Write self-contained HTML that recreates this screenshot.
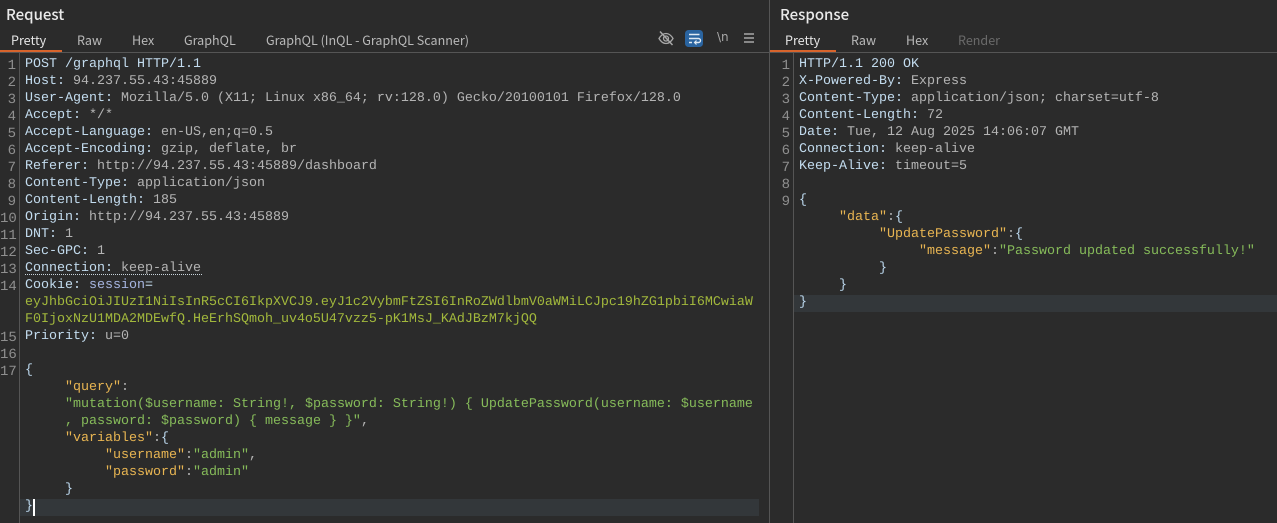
<!DOCTYPE html>
<html><head><meta charset="utf-8">
<style>
html,body{margin:0;padding:0;background:#2b2b2b;width:1277px;height:523px;overflow:hidden}
.a{position:absolute}
.title{position:absolute;top:5px;font:500 15px/20px "Noto Sans CJK JP","Liberation Sans",sans-serif;color:#eaeaea;white-space:nowrap}
.tab{position:absolute;top:31px;font:400 12.55px/18px "Noto Sans CJK JP","Liberation Sans",sans-serif;color:#b9b9b9;white-space:nowrap}
.l{position:absolute;margin-top:1px;font:13.34px/17px "Liberation Mono",monospace;color:#b4b4b4;white-space:pre;height:17px;text-rendering:geometricPrecision}
.n{position:absolute;margin-top:1px;font:14px/17px "Liberation Mono",monospace;color:#8f8f8f;text-align:right;height:17px;top:0;white-space:pre;text-rendering:geometricPrecision}
.h{color:#c3dcef}.k{color:#e8b552}.s{color:#86bb5a}.b{color:#bcd8ee}.c{color:#a6b5e0}.p{color:#b4b4b4}
</style></head><body>
<div class="a" style="left:0;top:52px;width:1277px;height:1px;background:#555"></div>
<div class="a" style="left:769px;top:0;width:1px;height:523px;background:#555"></div>
<div class="a" style="left:19px;top:53px;width:1px;height:470px;background:#555"></div>
<div class="a" style="left:793px;top:53px;width:1px;height:470px;background:#555"></div>
<div class="a" style="left:0;top:50px;width:62px;height:2px;background:#d8642c"></div>
<div class="a" style="left:770px;top:50px;width:66px;height:2px;background:#d8642c"></div>
<div class="a" style="left:20px;top:499px;width:739px;height:17px;background:#33373a"></div>
<div class="a" style="left:794px;top:295px;width:483px;height:17px;background:#33373a"></div>
<div class="a" style="left:33px;top:499px;width:2px;height:17px;background:#fff"></div>

<div class="title" style="left:6px">Request</div>
<div class="title" style="left:780px">Response</div>
<div class="tab" style="left:11px;color:#e6e6e6">Pretty</div>
<div class="tab" style="left:77px">Raw</div>
<div class="tab" style="left:132px">Hex</div>
<div class="tab" style="left:184px">GraphQL</div>
<div class="tab" style="left:266px">GraphQL (InQL - GraphQL Scanner)</div>
<div class="tab" style="left:785px;color:#e6e6e6">Pretty</div>
<div class="tab" style="left:851px">Raw</div>
<div class="tab" style="left:906px">Hex</div>
<div class="tab" style="left:958px;color:#6a6a6a">Render</div>

<svg class="a" style="left:655px;top:28px" width="110" height="22" viewBox="0 0 110 22" fill="none">
<path d="M4 10.5c2-3.4 4.500-5 7-5s5 1.600 7 5c-2 3.400-4.500 5-7 5s-5-1.600-7-5z" stroke="#a8a8a8" stroke-width="1.300"/>
<circle cx="11" cy="10.500" r="2.500" stroke="#a8a8a8" stroke-width="1.300"/>
<path d="M5 3.500L17.500 17" stroke="#a8a8a8" stroke-width="1.500"/>
<rect x="30" y="2" width="18" height="17" rx="3.500" fill="#2a64a0"/>
<path d="M34 6.500h10.500M34 14.500h3M34 10.500h9.500a2 2 0 0 1 0 4h-3.500" stroke="#dfe9f3" stroke-width="1.400"/>
<path d="M41.500 12.500l-2 2 2 2" stroke="#dfe9f3" stroke-width="1.200"/>
<path d="M101 7h-10M101 11h-10M101 15h-10" transform="translate(-2 -1)" stroke="#a8a8a8" stroke-width="1.500"/>
</svg>
<div class="a" style="left:717px;top:29px;font:12px/16px 'DejaVu Sans',sans-serif;color:#a8a8a8">\n</div>

<div class="n" style="left:0;width:16px;top:57px">1</div>
<div class="n" style="left:0;width:16px;top:74px">2</div>
<div class="n" style="left:0;width:16px;top:91px">3</div>
<div class="n" style="left:0;width:16px;top:108px">4</div>
<div class="n" style="left:0;width:16px;top:125px">5</div>
<div class="n" style="left:0;width:16px;top:142px">6</div>
<div class="n" style="left:0;width:16px;top:159px">7</div>
<div class="n" style="left:0;width:16px;top:176px">8</div>
<div class="n" style="left:0;width:16px;top:193px">9</div>
<div class="n" style="left:0;width:16px;top:210px">10</div>
<div class="n" style="left:0;width:16px;top:227px">11</div>
<div class="n" style="left:0;width:16px;top:244px">12</div>
<div class="n" style="left:0;width:16px;top:261px">13</div>
<div class="n" style="left:0;width:16px;top:278px">14</div>
<div class="n" style="left:0;width:16px;top:329px">15</div>
<div class="n" style="left:0;width:16px;top:346px">16</div>
<div class="n" style="left:0;width:16px;top:363px">17</div>

<div class="l" style="left:25px;top:55px"><span class="h">POST /graphql HTTP/1.1</span></div>
<div class="l" style="left:25px;top:72px"><span class="h">Host:</span> 94.237.55.43:45889</div>
<div class="l" style="left:25px;top:89px"><span class="h">User-Agent:</span> Mozilla/5.0 (X11; Linux x86_64; rv:128.0) Gecko/20100101 Firefox/128.0</div>
<div class="l" style="left:25px;top:106px"><span class="h">Accept:</span> */*</div>
<div class="l" style="left:25px;top:123px"><span class="h">Accept-Language:</span> en-US,en;q=0.5</div>
<div class="l" style="left:25px;top:140px"><span class="h">Accept-Encoding:</span> gzip, deflate, br</div>
<div class="l" style="left:25px;top:157px"><span class="h">Referer:</span> http://94.237.55.43:45889/dashboard</div>
<div class="l" style="left:25px;top:174px"><span class="h">Content-Type:</span> application/json</div>
<div class="l" style="left:25px;top:191px"><span class="h">Content-Length:</span> 185</div>
<div class="l" style="left:25px;top:208px"><span class="h">Origin:</span> http://94.237.55.43:45889</div>
<div class="l" style="left:25px;top:225px"><span class="h">DNT:</span> 1</div>
<div class="l" style="left:25px;top:242px"><span class="h">Sec-GPC:</span> 1</div>
<div class="l" style="left:25px;top:259px"><span class="h">Connection:</span> keep-alive</div>
<div class="a" style="left:25px;top:274px;width:177px;border-top:1px dotted #c8d4dc"></div>
<div class="l" style="left:25px;top:276px"><span class="h">Cookie:</span> <span class="c">session</span><span class="h">=</span></div>
<div class="l" style="left:25px;top:293px;color:#a2b83c">eyJhbGciOiJIUzI1NiIsInR5cCI6IkpXVCJ9.eyJ1c2VybmFtZSI6InRoZWdlbmV0aWMiLCJpc19hZG1pbiI6MCwiaW</div>
<div class="l" style="left:25px;top:310px;color:#a2b83c">F0IjoxNzU1MDA2MDEwfQ.HeErhSQmoh_uv4o5U47vzz5-pK1MsJ_KAdJBzM7kjQQ</div>
<div class="l" style="left:25px;top:327px"><span class="h">Priority:</span> u=0</div>
<div class="l" style="left:25px;top:361px"><span class="b">{</span></div>
<div class="l" style="left:65px;top:378px"><span class="k">"query"</span><span class="p">:</span></div>
<div class="l" style="left:65px;top:395px"><span class="s">"mutation($username: String!, $password: String!) { UpdatePassword(username: $username</span></div>
<div class="l" style="left:65px;top:412px"><span class="s">, password: $password) { message } }"</span><span class="p">,</span></div>
<div class="l" style="left:65px;top:429px"><span class="k">"variables"</span><span class="p">:</span><span class="b">{</span></div>
<div class="l" style="left:105px;top:446px"><span class="k">"username"</span><span class="p">:</span><span class="s">"admin"</span><span class="p">,</span></div>
<div class="l" style="left:105px;top:463px"><span class="k">"password"</span><span class="p">:</span><span class="s">"admin"</span></div>
<div class="l" style="left:65px;top:480px"><span class="b">}</span></div>
<div class="l" style="left:25px;top:497px"><span class="b">}</span></div>

<div class="n" style="left:770px;width:20px;top:57px">1</div>
<div class="n" style="left:770px;width:20px;top:74px">2</div>
<div class="n" style="left:770px;width:20px;top:91px">3</div>
<div class="n" style="left:770px;width:20px;top:108px">4</div>
<div class="n" style="left:770px;width:20px;top:125px">5</div>
<div class="n" style="left:770px;width:20px;top:142px">6</div>
<div class="n" style="left:770px;width:20px;top:159px">7</div>
<div class="n" style="left:770px;width:20px;top:176px">8</div>
<div class="n" style="left:770px;width:20px;top:193px">9</div>

<div class="l" style="left:799px;top:55px"><span class="h">HTTP/1.1 200 OK</span></div>
<div class="l" style="left:799px;top:72px"><span class="h">X-Powered-By:</span> Express</div>
<div class="l" style="left:799px;top:89px"><span class="h">Content-Type:</span> application/json; charset=utf-8</div>
<div class="l" style="left:799px;top:106px"><span class="h">Content-Length:</span> 72</div>
<div class="l" style="left:799px;top:123px"><span class="h">Date:</span> Tue, 12 Aug 2025 14:06:07 GMT</div>
<div class="l" style="left:799px;top:140px"><span class="h">Connection:</span> keep-alive</div>
<div class="l" style="left:799px;top:157px"><span class="h">Keep-Alive:</span> timeout=5</div>
<div class="l" style="left:799px;top:191px"><span class="b">{</span></div>
<div class="l" style="left:839px;top:208px"><span class="k">"data"</span><span class="p">:</span><span class="b">{</span></div>
<div class="l" style="left:879px;top:225px"><span class="k">"UpdatePassword"</span><span class="p">:</span><span class="b">{</span></div>
<div class="l" style="left:919px;top:242px"><span class="k">"message"</span><span class="p">:</span><span class="s">"Password updated successfully!"</span></div>
<div class="l" style="left:879px;top:259px"><span class="b">}</span></div>
<div class="l" style="left:839px;top:276px"><span class="b">}</span></div>
<div class="l" style="left:799px;top:293px"><span class="b">}</span></div>
</body></html>
